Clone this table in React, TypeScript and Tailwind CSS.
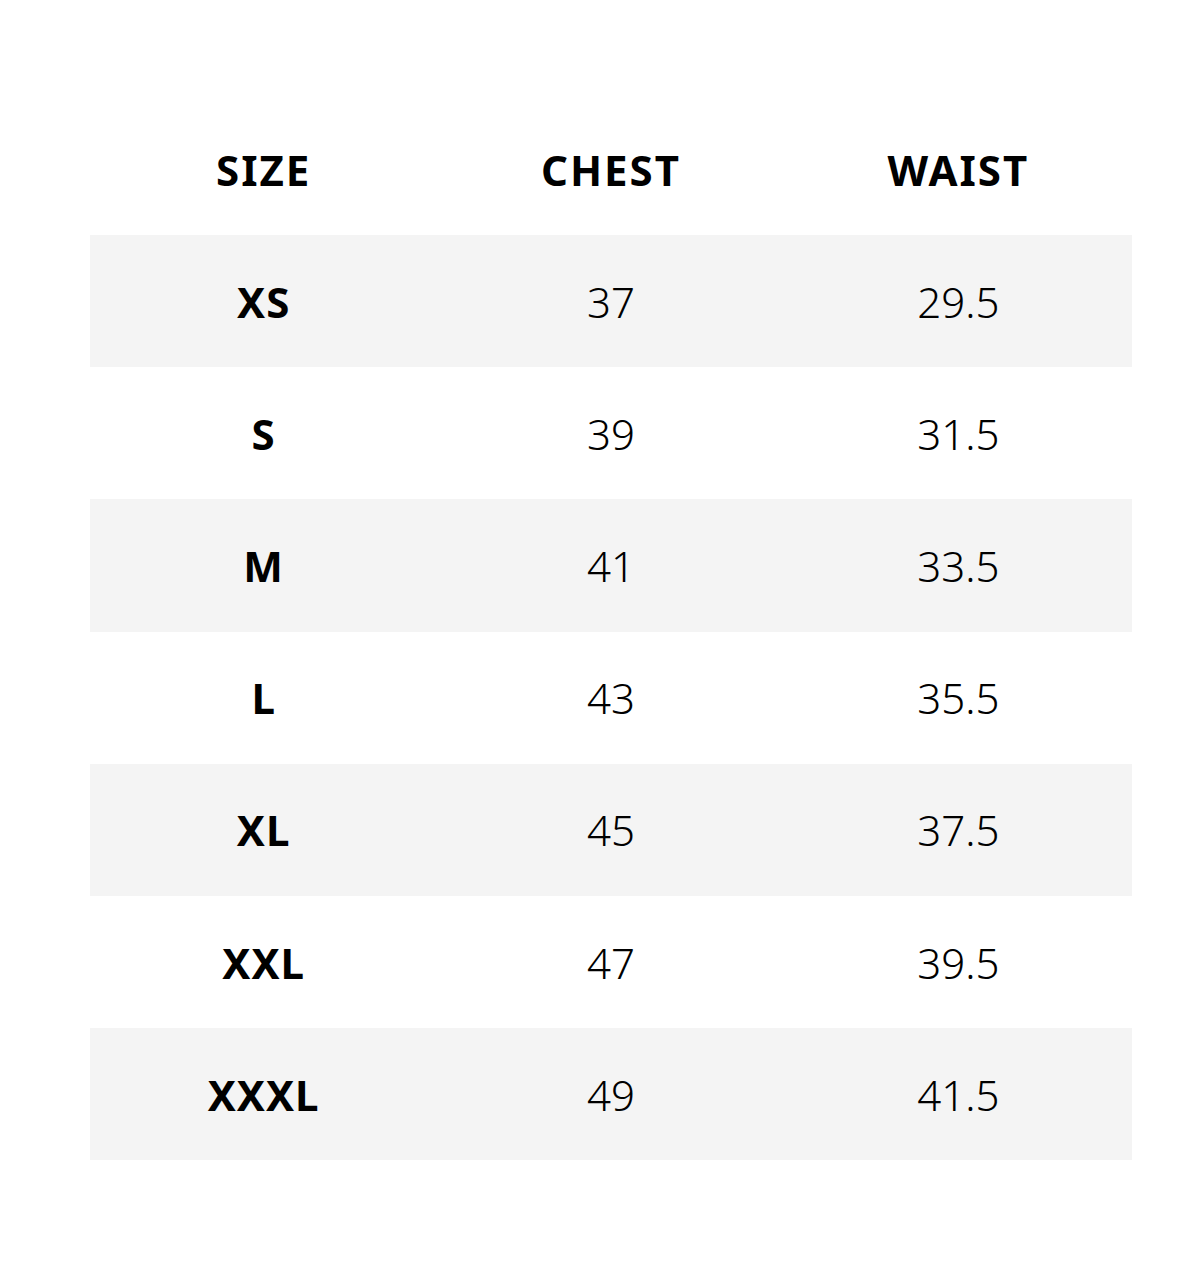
import React from "react";

const rows: [string, string, string][] = [
  ["XS", "37", "29.5"],
  ["S", "39", "31.5"],
  ["M", "41", "33.5"],
  ["L", "43", "35.5"],
  ["XL", "45", "37.5"],
  ["XXL", "47", "39.5"],
  ["XXXL", "49", "41.5"],
];

export default function App() {
  return (
    <div
      className="w-[1192px] h-[1288px] bg-white pt-[103px] pl-[90px]"
      style={{ fontFamily: '"Noto Sans", "Open Sans", sans-serif' }}
    >
      <div className="w-[1042px]">
        <div className="grid grid-cols-3 h-[132px] items-center text-center text-[42px] font-bold text-black tracking-[2px]">
          <div>SIZE</div>
          <div>CHEST</div>
          <div>WAIST</div>
        </div>
        {rows.map((r, i) => (
          <div
            key={r[0]}
            className={
              "grid grid-cols-3 h-[132.2px] items-center text-center text-[42px] text-black " +
              (i % 2 === 0 ? "bg-[#f4f4f4]" : "bg-white")
            }
          >
            <div className="font-bold tracking-[1px]">{r[0]}</div>
            <div className="font-light">{r[1]}</div>
            <div className="font-light">{r[2]}</div>
          </div>
        ))}
      </div>
    </div>
  );
}
